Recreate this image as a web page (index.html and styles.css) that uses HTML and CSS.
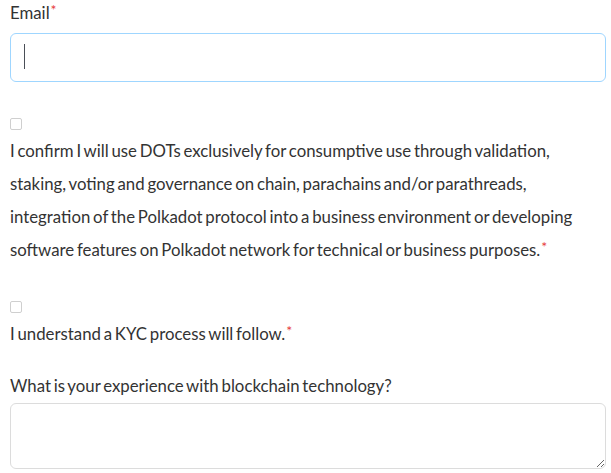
FILE: index.html
```html
<!DOCTYPE html>
<html>
<head>
<meta charset="utf-8">
<link rel="stylesheet" href="styles.css">
</head>
<body>
<form class="form">
  <div class="field field-email">
    <label class="label">Email<span class="req">*</span></label>
    <div class="input-wrap">
      <input class="input" type="email">
      <span class="caret"></span>
    </div>
  </div>
  <div class="field field-check first">
    <input class="check" type="checkbox">
    <p class="check-text">I confirm I will use DOTs exclusively for consumptive use through validation, staking, voting and governance on chain, parachains and/or parathreads, integration of the Polkadot protocol into a business environment or developing software features on Polkadot network for technical or business purposes.<span class="req">*</span></p>
  </div>
  <div class="field field-check second">
    <input class="check" type="checkbox">
    <p class="check-text">I understand a KYC process will follow.<span class="req">*</span></p>
  </div>
  <div class="field field-area">
    <label class="label area-label">What is your experience with blockchain technology?</label>
    <textarea class="textarea"></textarea>
  </div>
</form>
</body>
</html>
```
FILE: styles.css
```css
html, body {
  margin: 0;
  padding: 0;
  background: #ffffff;
}
body {
  font-family: "Lato", "Noto Sans", sans-serif;
  font-size: 16.8px;
  word-spacing: -1.5px;
  color: #333333;
  overflow: hidden;
}
.form {
  padding: 1px 5px 0 10px;
  display: flex;
  flex-direction: column;
}
.label {
  display: block;
  line-height: 24px;
}
.req {
  color: #e63c3c;
  font-size: 14px;
  vertical-align: 4px;
  line-height: 0;
  margin-left: 1px;
}
.input-wrap {
  position: relative;
  margin-top: 8px;
}
.input {
  display: block;
  box-sizing: border-box;
  width: 596px;
  height: 49px;
  margin: 0;
  border: 1px solid #9fd6ff;
  border-radius: 6px;
  background: #fff;
  outline: none;
  font: inherit;
}
.caret {
  position: absolute;
  left: 14px;
  top: 11px;
  width: 1px;
  height: 25px;
  background: #4a4f57;
}
.field-check {
  display: flex;
  flex-direction: column;
  align-items: flex-start;
}
.first {
  margin-top: 36px;
}
.second {
  margin-top: 35px;
}
.check {
  -webkit-appearance: none;
  appearance: none;
  box-sizing: border-box;
  width: 12px;
  height: 12px;
  margin: 0;
  border: 1px solid #cfcfcf;
  border-radius: 2px;
  background: #fff;
}
.check-text {
  margin: 4px 0 0 0;
  line-height: 33px;
}
.second .check-text {
  margin-top: 4px;
}
.field-area {
  margin-top: 19px;
}
.area-label {
  line-height: 33px;
}
.textarea {
  display: block;
  box-sizing: border-box;
  width: 596px;
  height: 66px;
  margin: 1px 0 0 0;
  border: 1px solid #dcdcdc;
  border-radius: 6px;
  font: inherit;
  resize: vertical;
}
```
